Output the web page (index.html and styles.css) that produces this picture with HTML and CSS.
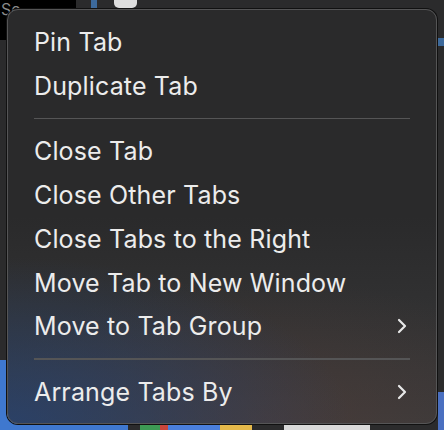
FILE: index.html
```html
<!DOCTYPE html>
<html>
<head>
<meta charset="utf-8">
<link rel="stylesheet" href="styles.css">
</head>
<body>
<div class="backdrop">
  <div class="bg-top-black"><span class="bg-se">Se</span></div>
  <div class="bg-top-blue"></div>
  <div class="bg-top-pill"></div>
  <div class="bg-bottom-blue"></div>
  <div class="bg-bottom-chrome"></div>
  <div class="bg-bottom-yellow"></div>
  <div class="bg-bottom-light"></div>
  <div class="bg-right-blue-top"></div>
  <div class="bg-right-blue-bottom"></div>
</div>
<div class="menu">
  <div class="item">Pin Tab</div>
  <div class="item">Duplicate Tab</div>
  <div class="sep"></div>
  <div class="item">Close Tab</div>
  <div class="item">Close Other Tabs</div>
  <div class="item">Close Tabs to the Right</div>
  <div class="item">Move Tab to New Window</div>
  <div class="item">Move to Tab Group
    <svg class="chev" width="10" height="16" viewBox="0 0 10 16"><path d="M2 2 L8 8 L2 14" fill="none" stroke="#e8e8e8" stroke-width="2.2" stroke-linecap="round" stroke-linejoin="round"/></svg>
  </div>
  <div class="sep"></div>
  <div class="item">Arrange Tabs By
    <svg class="chev" width="10" height="16" viewBox="0 0 10 16"><path d="M2 2 L8 8 L2 14" fill="none" stroke="#e8e8e8" stroke-width="2.2" stroke-linecap="round" stroke-linejoin="round"/></svg>
  </div>
</div>
</body>
</html>
```
FILE: styles.css
```css
html, body {
  margin: 0;
  padding: 0;
}
body {
  width: 444px;
  height: 430px;
  overflow: hidden;
  background: #2b2b2c;
  position: relative;
  font-family: "Inter", "Helvetica Neue", "Liberation Sans", sans-serif;
}
.backdrop {
  position: absolute;
  inset: 0;
}
.backdrop > div { position: absolute; }
.bg-top-black {
  left: 0; top: 0; width: 76px; height: 40px;
  background: #000;
}
.bg-se {
  position: absolute;
  left: 1px; top: 1px;
  color: #8a8a8a;
  font-size: 16px;
  line-height: 16px;
}
.bg-top-blue { left: 91px; top: 0; width: 6px; height: 9px; background: #3d6a9c; }
.bg-top-pill { left: 114px; top: 0; width: 23px; height: 8px; background: #dedede; border-radius: 0 0 5px 5px; }
.bg-bottom-blue { left: 0; top: 360px; width: 128px; height: 70px; background: #3f78cf; }
.bg-bottom-chrome { left: 140px; top: 422px; width: 80px; height: 8px; background: linear-gradient(90deg, #3d9a54 0 25%, #c9463b 25% 35%, #4a7fdc 35% 100%); }
.bg-bottom-yellow { left: 220px; top: 422px; width: 32px; height: 8px; background: #e5b94a; }
.bg-bottom-light { left: 284px; top: 422px; width: 86px; height: 8px; background: #d9d9d9; }
.bg-right-blue-top { left: 438px; top: 38px; width: 6px; height: 8px; background: #3d6a9c; }
.bg-right-blue-bottom { left: 438px; top: 392px; width: 6px; height: 38px; background: #4a6fc0; }

.menu {
  position: relative;
  margin: 9px 0 0 7px;
  width: 430px;
  height: 415px;
  box-sizing: border-box;
  padding: 10px 0 9px 0;
  border-radius: 11px;
  border: 1px solid #555556;
  box-shadow: 0 0 0 1px #111;
  background:
    radial-gradient(ellipse 80% 40% at 0% 100%, rgba(40,66,110,0.85), rgba(40,66,110,0) 100%),
    radial-gradient(ellipse 70% 35% at 60% 100%, rgba(80,60,55,0.6), rgba(80,60,55,0) 100%),
    linear-gradient(180deg, #2a2a2b 0%, #2a2a2b 50%, #3a3a3b 100%);
  color: #ececec;
  display: flex;
  flex-direction: column;
}
.item {
  height: 44px;
  display: flex;
  align-items: center;
  justify-content: space-between;
  padding: 0 29px 0 26px;
  font-size: 25px;
  letter-spacing: 0.15px;
}
.chev { flex: none; }
.sep {
  height: 2px;
  margin: 10px 26px 10px 26px;
  background: #555556;
}
```
